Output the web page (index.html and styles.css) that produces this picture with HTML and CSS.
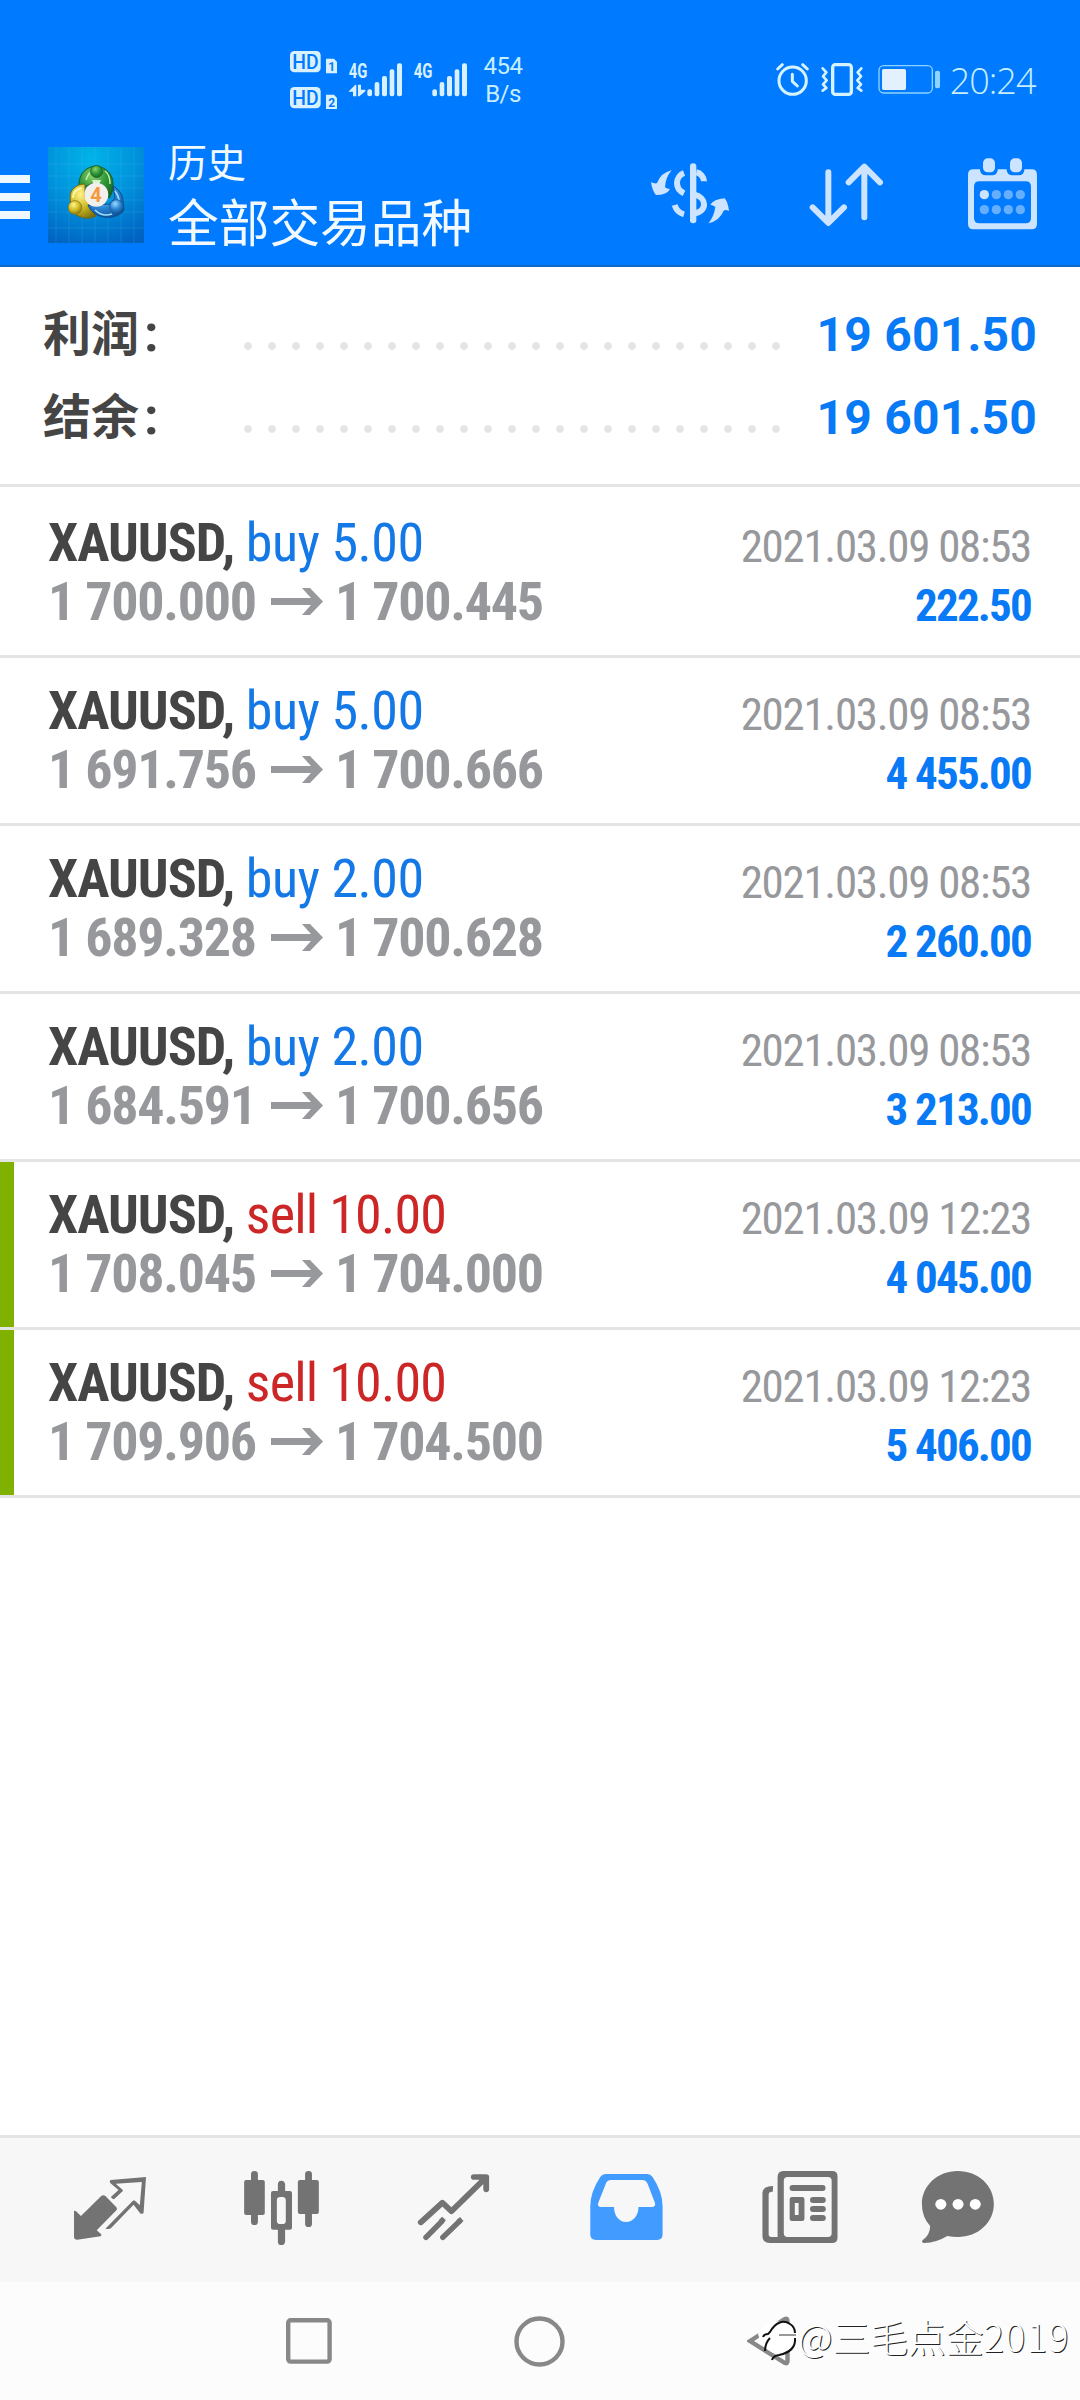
FILE: index.html
```html
<!DOCTYPE html>
<html lang="zh-CN">
<head>
<meta charset="utf-8">
<title>历史</title>
<link rel="stylesheet" href="styles.css">
</head>
<body>
<div class="screen">
  <header class="header">
    <div class="status">
      <svg class="signals" viewBox="60 50 540 200" width="180" height="66.7">
        <g fill="#d9f1ff">
          <rect x="60" y="62" width="92" height="64" rx="13"/>
          <rect x="60" y="170" width="92" height="64" rx="13"/>
          <path d="M168 85h24l9 10v34h-33zM168 193h24l9 10v33h-33z"/>
          <path d="M235 184l21-21h3v35h-10v-14zM264 163h9v15h13v5l-18 15h-4z"/>
          <g id="bars">
            <rect x="292" y="177" width="14" height="21" rx="6"/>
            <rect x="314" y="155" width="14" height="43" rx="6"/>
            <rect x="336" y="137" width="15" height="61" rx="6"/>
            <rect x="359" y="117" width="14" height="81" rx="6"/>
            <rect x="381" y="99" width="15" height="99" rx="6"/>
          </g>
          <use href="#bars" x="195"/>
          <text class="gen" x="236" y="143" textLength="56" lengthAdjust="spacingAndGlyphs">4G</text>
          <text class="gen" x="431" y="143" textLength="56" lengthAdjust="spacingAndGlyphs">4G</text>
        </g>
        <g class="hd" fill="#007aff">
          <text x="67" y="115" textLength="79" lengthAdjust="spacingAndGlyphs">HD</text>
          <text x="67" y="223" textLength="79" lengthAdjust="spacingAndGlyphs">HD</text>
          <text class="sim" x="175" y="121">1</text>
          <text class="sim" x="175" y="229">2</text>
        </g>
      </svg>
      <div class="speed"><span>454</span><span>B/s</span></div>
      <svg class="device" viewBox="45 63 500 110" width="166.7" height="36.7" fill="none" stroke="#d4f3ff" stroke-width="9" stroke-linecap="round" stroke-linejoin="round">
        <circle cx="98" cy="122" r="41"/>
        <path d="M97 103v21l15 14M53 87l14-13M142 87l-14-13"/>
        <rect x="218" y="74" width="56" height="89" rx="8" stroke-width="10"/>
        <path d="M188 85l11 12-10 12 11 12-11 12 10 11-11 8M304 85l-11 12 10 12-11 12 11 12-10 11 11 8" stroke-width="8"/>
        <rect x="357" y="77" width="160" height="82" rx="14" stroke-width="4" stroke="#8fd4ff"/>
        <rect x="366" y="87" width="72" height="63" rx="5" fill="#e3f1ff" stroke="none"/>
        <rect x="525" y="92" width="15" height="53" rx="6" fill="#8fd4ff" stroke="none"/>
      </svg>
      <span class="clock">20:24</span>
    </div>
    <div class="appbar">
      <div class="menu"><i></i><i></i><i></i></div>
      <svg class="logo" viewBox="0 0 96 96" width="96" height="96">
        <defs>
          <radialGradient id="bg" cx=".45" cy=".12" r=".95"><stop offset="0" stop-color="#00b4e8"/><stop offset=".5" stop-color="#0092dc"/><stop offset="1" stop-color="#0063c2"/></radialGradient>
          <radialGradient id="gr" cx=".4" cy=".3" r=".8"><stop offset="0" stop-color="#8ed46d"/><stop offset=".5" stop-color="#2f9838"/><stop offset="1" stop-color="#126322"/></radialGradient>
          <radialGradient id="ye" cx=".4" cy=".3" r=".8"><stop offset="0" stop-color="#fff48a"/><stop offset=".5" stop-color="#d1bb25"/><stop offset="1" stop-color="#756c0b"/></radialGradient>
          <radialGradient id="bl" cx=".4" cy=".3" r=".8"><stop offset="0" stop-color="#9ad9ff"/><stop offset=".5" stop-color="#2b86d2"/><stop offset="1" stop-color="#0b4b94"/></radialGradient>
        </defs>
        <rect width="96" height="96" fill="url(#bg)"/>
        <path d="M8 0v96M21 0v96M34 0v96M47 0v96M60 0v96M73 0v96M86 0v96M0 17h96M0 29h96M0 41h96M0 53h96M0 65h96M0 81h96" stroke="#5cc8f4" stroke-opacity=".22" stroke-width=".8"/>
        <path d="M31 38C31 26 38 20 48 19c10 1 17 8 17 18 0 6-1 10-4 14l-8-14H43l-6 3z" fill="url(#gr)" stroke="#165f25"/>
        <path d="M38 33c2-6 5-9 8-10M57 24c4 3 5 8 5 13" fill="none" stroke="#c3efaa" stroke-width="1.4"/>
        <path d="M37 37c-9 0-15 6-15 13 0 7 2 10 4 16 5 5 14 7 22 3L43 58l-6-8z" fill="url(#ye)" stroke="#6f6914"/>
        <path d="M34 41c-6 1-9 5-9 10" fill="none" stroke="#fff8af" stroke-width="1.8"/>
        <path d="M65 39c7 4 10 10 10 16l1 8c-4 7-17 9-24 6-6-2-10-6-12-11l22-1 5-6z" fill="url(#bl)" stroke="#0d4b8b"/>
        <path d="M67 44c3 4 4 7 4 10M47 63c5 5 11 6 17 4" fill="none" stroke="#a3ddff" stroke-width="1.6"/>
        <circle cx="48.5" cy="24.5" r="6" fill="url(#gr)" stroke="#165f25" stroke-width=".8"/>
        <circle cx="27" cy="60.5" r="6.8" fill="url(#ye)" stroke="#857a16" stroke-width=".8"/>
        <circle cx="68.5" cy="59.5" r="6.8" fill="url(#bl)" stroke="#165898" stroke-width=".8"/>
        <path d="M44 33h9l-2 5h-5z" fill="#d7f2cf"/>
        <circle cx="48.3" cy="47.7" r="12" fill="#f2efed"/>
        <text x="48" y="55" text-anchor="middle" class="four">4</text>
      </svg>
      <div class="titles"><div class="sub">历史</div><div class="main">全部交易品种</div></div>
      <svg class="act-money" viewBox="90 80 240 210" width="80" height="70" fill="#cce4ff">
        <path d="M93 156q14 5 18 2 12-31 44-38-18 20-20 51 6 5 15 5-9 18-42 18-11-12-15-38z"/>
        <path d="M327 242q-10-5-16-1-12 30-46 38 17-20 21-49-7-6-15-7 10-16 43-19 10 12 13 38z"/>
        <rect x="210" y="99" width="19" height="180" rx="9"/>
        <g fill="none" stroke="#cce4ff" stroke-width="18" stroke-linecap="round">
          <path d="M192 128c-11 4-21 15-21 31s11 25 21 30" stroke-linecap="butt"/>
          <path d="M229 126c12 2 23 14 23 27M164 224c4 14 14 24 28 28" stroke-linecap="butt"/>
          <circle cx="252" cy="153" r=".1"/><circle cx="164" cy="224" r=".1"/>
          <path d="M224 193c36 8 39 50 0 56" stroke-linecap="butt"/>
        </g>
      </svg>
      <svg class="act-sort" viewBox="560 80 240 220" width="80" height="73.3" fill="none" stroke="#cce4ff" stroke-width="18" stroke-linecap="round" stroke-linejoin="round">
        <path d="M624 126v150M577 231l47 47 47-47M732 261V111M685 156l47-47 47 47"/>
      </svg>
      <svg class="act-cal" viewBox="1044 80 207 220" width="69" height="73.3" fill="#cce4ff">
        <path fill-rule="evenodd" d="M1060 117h20v3q2 15 17 15h20q14 0 16-15v-3h27v3q2 15 17 15h20q14 0 16-15v-3h22q16 0 16 16v148q0 16-16 16h-175q-16 0-16-16V133q0-16 16-16zM1078 153q-16 0-16 16v94q0 16 16 16h139q16 0 16-16v-94q0-16-16-16z"/>
        <rect x="1089" y="84" width="36" height="42" rx="14"/><rect x="1170" y="84" width="36" height="42" rx="14"/>
        <circle cx="1093" cy="193" r="14"/>
        <g fill="#66afff"><circle cx="1129" cy="193" r="14"/><circle cx="1165" cy="193" r="14"/><circle cx="1201" cy="193" r="14"/><circle cx="1093" cy="238" r="14"/><circle cx="1129" cy="238" r="14"/><circle cx="1165" cy="238" r="14"/><circle cx="1201" cy="238" r="14"/></g>
      </svg>
    </div>
  </header>

  <section class="summary">
    <div class="sum"><span class="label">利润<span class="colon">:</span></span><span class="dots"></span><span class="amount">19 601.50</span></div>
    <div class="sum"><span class="label">结余<span class="colon">:</span></span><span class="dots"></span><span class="amount">19 601.50</span></div>
  </section>

  <main class="deals">
    <article class="deal"><div><p class="line"><b>XAUUSD, </b><span class="buy">buy 5.00</span></p><p class="line price">1 700.000<svg class="arrow" viewBox="0 0 52 27"><path d="M0 10h40l-9-10h8l13 13.500-13 13.500h-8l9-10H0z"/></svg>1 700.445</p></div><div class="right"><time>2021.03.09 08:53</time><strong>222.50</strong></div></article>
    <article class="deal"><div><p class="line"><b>XAUUSD, </b><span class="buy">buy 5.00</span></p><p class="line price">1 691.756<svg class="arrow" viewBox="0 0 52 27"><path d="M0 10h40l-9-10h8l13 13.500-13 13.500h-8l9-10H0z"/></svg>1 700.666</p></div><div class="right"><time>2021.03.09 08:53</time><strong>4 455.00</strong></div></article>
    <article class="deal"><div><p class="line"><b>XAUUSD, </b><span class="buy">buy 2.00</span></p><p class="line price">1 689.328<svg class="arrow" viewBox="0 0 52 27"><path d="M0 10h40l-9-10h8l13 13.500-13 13.500h-8l9-10H0z"/></svg>1 700.628</p></div><div class="right"><time>2021.03.09 08:53</time><strong>2 260.00</strong></div></article>
    <article class="deal"><div><p class="line"><b>XAUUSD, </b><span class="buy">buy 2.00</span></p><p class="line price">1 684.591<svg class="arrow" viewBox="0 0 52 27"><path d="M0 10h40l-9-10h8l13 13.500-13 13.500h-8l9-10H0z"/></svg>1 700.656</p></div><div class="right"><time>2021.03.09 08:53</time><strong>3 213.00</strong></div></article>
    <article class="deal tp"><div><p class="line"><b>XAUUSD, </b><span class="sell">sell 10.00</span></p><p class="line price">1 708.045<svg class="arrow" viewBox="0 0 52 27"><path d="M0 10h40l-9-10h8l13 13.500-13 13.500h-8l9-10H0z"/></svg>1 704.000</p></div><div class="right"><time>2021.03.09 12:23</time><strong>4 045.00</strong></div></article>
    <article class="deal tp"><div><p class="line"><b>XAUUSD, </b><span class="sell">sell 10.00</span></p><p class="line price">1 709.906<svg class="arrow" viewBox="0 0 52 27"><path d="M0 10h40l-9-10h8l13 13.500-13 13.500h-8l9-10H0z"/></svg>1 704.500</p></div><div class="right"><time>2021.03.09 12:23</time><strong>5 406.00</strong></div></article>
  </main>

  <nav class="tabs">
    <svg viewBox="69.7 54 499.5 432" preserveAspectRatio="none">
      <path d="M215 273q3-2 6 1l14 14 59-60q6-5 12 0l32 34q4 4 0 9l-57 60 13 12q2 3-2 6l-68 10q-9 0-9-9z"/>
      <path fill-rule="evenodd" d="M424 171l-7 107q-4 6-10 2l-19-26-66 71q-5 4-16 1l80-84q3-3 6 0l14 14 6-70-76 5 20 18q2 3 0 5l-25 24q-6-1-9-7l22-21-23-20q-5-5 0-10z"/>
    </svg>
    <svg viewBox="569.2 54 499.5 432" preserveAspectRatio="none">
      <rect x="709" y="180" width="60" height="105" rx="6"/><rect x="729" y="153" width="20" height="162" rx="10"/>
      <rect x="865" y="180" width="61" height="102" rx="6"/><rect x="886" y="153" width="20" height="168" rx="10"/>
      <path fill-rule="evenodd" d="M793 213h14v-21q1-10 10-10t11 10v21h14q6 0 6 6v104q0 6-6 6h-14v36q-1 10-11 10t-10-10v-36h-14q-6 0-6-6V219q0-6 6-6zM814 231q-10 0-10 10v61q0 10 10 10h6q10 0 10-10v-61q0-10-10-10z"/>
    </svg>
    <svg viewBox="1068.7 54 499.5 432" preserveAspectRatio="none">
      <g fill="none" stroke="#737373" stroke-width="16" stroke-linejoin="round" stroke-linecap="round">
        <path d="M1222 307l63-59 26 26 98-99M1376 171h36v37" stroke-width="17"/>
        <path d="M1237 352l46-48M1286 352l48-48"/>
      </g>
      <path d="M1275 299l9-9 11 11-9 9zM1325 301l11-10 10 12-9 9z"/>
    </svg>
    <svg viewBox="0 54 499.5 432" preserveAspectRatio="none">
      <path fill="#429bff" fill-rule="evenodd" d="M192 162h119q10 0 16 9 29 45 29 88v84q0 17-16 17H163q-17 0-17-17v-84q0-43 29-88 6-9 17-9zM206 180q-10 0-14 9l-23 60q-3 12 9 12h37c0 24 13 45 35 45s36-21 36-45h38q13 0 10-12l-21-56q-4-13-17-13z"/>
    </svg>
    <svg viewBox="499.5 54 499.5 432" preserveAspectRatio="none">
      <path fill-rule="evenodd" d="M707 153h141q16 0 16 16v184q0 16-16 16H667q-21 0-21-21V220q0-22 31-22l-1 17q-12-1-12 9v119q0 8 8 8h18V171q0-18 17-18zM719 171q-11 0-11 11v158q0 11 11 11h117q11 0 11-11V182q0-11-11-11z"/>
      <rect x="725" y="195" width="104" height="18" rx="8"/><rect x="784" y="231" width="46" height="18" rx="9"/><rect x="784" y="258" width="46" height="18" rx="9"/><rect x="784" y="285" width="46" height="18" rx="9"/>
      <path fill-rule="evenodd" d="M732 231h29q7 0 7 7v58q0 7-7 7h-29q-7 0-7-7v-58q0-7 7-7zM740 249v36h11v-36z"/>
    </svg>
    <svg viewBox="999 54 499.5 432" preserveAspectRatio="none">
      <path d="M1213 153c60 0 105 44 105 99s-45 99-105 99q-16 0-30-3-32 20-67 21-10-1-5-8 22-16 22-43-24-27-24-66c0-55 46-99 104-99z"/>
      <g fill="#fff"><circle cx="1164" cy="253" r="16"/><circle cx="1214" cy="253" r="16"/><circle cx="1264" cy="253" r="16"/></g>
    </svg>
  </nav>

  <footer class="sysnav">
    <svg class="recent" viewBox="0 0 46 46" width="46" height="46"><rect x="2.2" y="2.2" width="41.4" height="41.4" rx="2.5"/></svg>
    <svg class="home" viewBox="0 0 51 51" width="51" height="51"><circle cx="25.5" cy="25.5" r="23"/></svg>
    <svg class="back" viewBox="0 0 43 50" width="43" height="50"><path d="M3 25L38 3q2.500-1 2.500 2v40q0 3-2.500 2z"/></svg>
    <div class="watermark">
      <svg viewBox="0 0 36 44" width="36" height="44">
        <path d="M-4 20C2 9 13 6 22 8c7 1 12 8 12 16-2 10-9 15-19 16-9-2-16-9-19-20z" fill="#fff"/>
        <path d="M1 23q1-3 5-3l2-2C13 9 21 5 28 10q5 3 5 9M3 37c0-5 1-9 5-13M33 24c1 10-7 15-16 17q-6 1-7 5" fill="none" stroke="#111" stroke-width="2"/>
        <path d="M17 21h17" stroke="#999" stroke-width="2"/>
      </svg>
      <span>@三毛点金<span class="year">2019</span></span>
    </div>
  </footer>
</div>
</body>
</html>
```
FILE: styles.css
```css
* { box-sizing: border-box; }
body { margin: 0; background: #fff; font-family: Roboto, "Noto Sans CJK SC", sans-serif; }
p { margin: 0; }
svg { display: block; flex: none; }
.screen { width: 1080px; height: 2400px; display: flex; flex-direction: column; overflow: hidden; }

.header { height: 267px; background: #007aff; border-bottom: 2px solid #1668c8; display: flex; flex-direction: column; }
.status { height: 130px; display: flex; align-items: flex-start; padding-left: 290px; }
.signals { margin-top: 46.7px; }
.gen { font: 700 62px Roboto, sans-serif; }
.hd { font: 500 58px Roboto, sans-serif; }
.sim { font: 700 36px Roboto, sans-serif; }
.speed { display: flex; flex-direction: column; width: 60px; margin: 52px 0 0 3px; font-size: 24px; line-height: 28px; text-align: center; color: #c6eeff; letter-spacing: -.5px; }
.device { margin: 61px 0 0 242px; }
.clock { margin: 57px 0 0 8px; font: 300 36px/48px "Open Sans", sans-serif; color: #c6eeff; letter-spacing: -1px; }

.appbar { flex: 1; display: flex; align-items: flex-start; }
.menu { width: 30px; margin: 45px 18px 0 0; display: flex; flex-direction: column; gap: 10px; }
.menu i { height: 8px; background: #f0f8ff; }
.logo { margin-top: 17px; }
.four { font: 700 20px Roboto, sans-serif; fill: #f59a3c; }
.titles { margin: 5px 0 0 24px; width: 483px; color: #f2faff; font-family: "Noto Sans CJK SC", sans-serif; }
.sub { font-size: 39px; line-height: 50px; }
.main { font-size: 50.700px; line-height: 71px; }
.act-money { margin: 26.7px 76.700px 0 -1px; }
.act-sort { margin-top: 26.7px; }
.act-cal { margin: 26.7px 0 0 81.300px; }

.summary { height: 220px; padding: 26px 43px 0; border-bottom: 3px solid #e4e4e4; }
.sum { height: 83px; line-height: 83px; display: flex; font-size: 48px; font-weight: 700; }
.label { width: 193px; color: #454545; }
.colon { margin-left: 5px; font-size: 52px; line-height: 1; }
.dots { width: 552px; background: radial-gradient(circle at 12px 53px, #e5e5e5 3.500px, transparent 4.200px) 0 0 / 24px 83px; }
.amount { flex: 1; text-align: right; color: #087af5; letter-spacing: .2px; }

.deals { flex: 1; padding-top: 3px; }
.deal { height: 168px; padding: 23px 48px 0; border-bottom: 3px solid #e4e4e4; display: flex; justify-content: space-between; font-family: "Roboto Condensed", Roboto, sans-serif; font-stretch: 75%; }
.tp { background: linear-gradient(to right, #80b000 14px, transparent 14px) no-repeat; background-clip: padding-box; }
.line { height: 59px; line-height: 59px; font-size: 54px; white-space: nowrap; color: #454545; }
.line b { letter-spacing: -1px; }
.buy { color: #1478e6; letter-spacing: -.5px; }
.sell { color: #cc2626; letter-spacing: -.75px; }
.price { display: flex; align-items: center; font-weight: 700; color: #97989c; letter-spacing: -1.250px; }
.arrow { width: 52px; height: 27px; margin: 0 12px 0 15px; fill: #97989c; }
.right { padding: 4px 1px 0 0; display: flex; flex-direction: column; text-align: right; font-size: 45px; line-height: 59px; white-space: nowrap; }
time { color: #97989c; letter-spacing: -1.300px; }
strong { color: #087af5; letter-spacing: -1.800px; }

.tabs { height: 147px; border-top: 3px solid #e4e4e4; background: #f7f7f7; display: flex; padding: 0 24px; }
.tabs svg { width: 172px; height: 144px; fill: #737373; }

.sysnav { position: relative; height: 118px; background: #fcfcfc; display: flex; align-items: center; padding-left: 286px; }
.sysnav > svg { fill: none; stroke: #888; stroke-width: 4.400; }
.home { margin-left: 182px; }
.back { margin-left: 182px; }
.watermark { position: absolute; left: 762px; top: 32px; display: flex; color: #fff; }
.watermark svg { overflow: visible; }
.watermark span { font: 300 37.800px/44px "Noto Sans CJK SC", sans-serif; text-shadow: 1px 1px 0 #222; white-space: nowrap; }
.watermark .year { letter-spacing: 1.300px; }
```
